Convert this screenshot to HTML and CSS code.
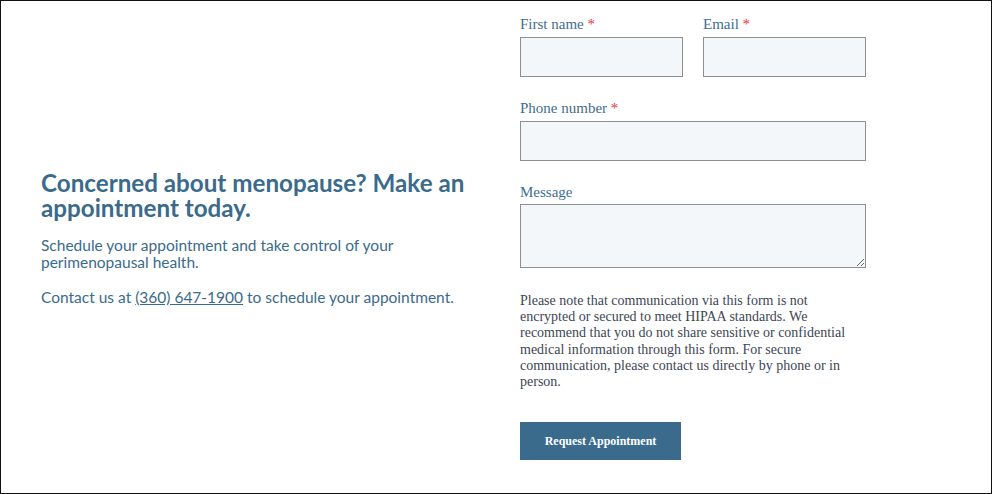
FILE: index.html
```html
<!DOCTYPE html>
<html lang="en">
<head>
<meta charset="utf-8">
<title>Request Appointment</title>
<link rel="stylesheet" href="styles.css">
</head>
<body>
<div class="frame">
  <section class="intro">
    <h2 class="intro-title">Concerned about menopause? Make an appointment today.</h2>
    <p class="intro-text">Schedule your appointment and take control of your perimenopausal health.</p>
    <p class="intro-text">Contact us at <a class="phone-link" href="#">(360) 647-1900</a> to schedule your appointment.</p>
  </section>
  <form class="form">
    <div class="row">
      <div class="field">
        <label class="label">First name <span class="req">*</span></label>
        <input class="input" type="text">
      </div>
      <div class="field">
        <label class="label">Email <span class="req">*</span></label>
        <input class="input" type="email">
      </div>
    </div>
    <div class="field">
      <label class="label">Phone number <span class="req">*</span></label>
      <input class="input" type="tel">
    </div>
    <div class="field">
      <label class="label">Message</label>
      <textarea class="input textarea"></textarea>
    </div>
    <p class="note">Please note that communication via this form is not encrypted or secured to meet HIPAA standards. We recommend that you do not share sensitive or confidential medical information through this form. For secure communication, please contact us directly by phone or in person.</p>
    <button class="submit" type="button">Request Appointment</button>
  </form>
</div>
</body>
</html>
```
FILE: styles.css
```css
* { box-sizing: border-box; }
html, body { margin: 0; padding: 0; }
body { background: #fff; }
.frame {
  width: 992px;
  height: 494px;
  border: 1px solid #111;
  display: flex;
  align-items: center;
  padding: 0 0 0 40px;
  gap: 40px;
}
.intro {
  width: 439px;
  color: #3a6b8c;
  font-family: "Lato", "Open Sans", sans-serif;
}
.intro-title {
  margin: 0 0 17px;
  font-size: 24.2px;
  line-height: 25px;
  font-weight: 700;
}
.intro-text {
  margin: 0 0 18px;
  font-size: 15.5px;
  line-height: 17px;
  font-weight: 400;
}
.phone-link { color: #3a6b8c; text-decoration: underline; }
.form {
  width: 346px;
  align-self: flex-start;
  padding-top: 12px;
  font-family: "Liberation Serif", "Times New Roman", serif;
}
.row { display: flex; gap: 20px; }
.row .field { flex: 1; }
.field { margin-bottom: 20px; }
.label {
  display: block;
  font-size: 15px;
  line-height: 20px;
  color: #3e6e90;
  padding-top: 1px;
  margin-bottom: 3px;
}
.req { color: #e8333c; }
.input {
  display: block;
  width: 100%;
  height: 40px;
  margin: 0;
  border: 1px solid #8f8f8f;
  background: #f4f7fa;
  border-radius: 0;
  font: inherit;
}
.textarea { height: 64px; resize: vertical; margin-top: -1px; }
.note {
  margin: 25px 0 32px;
  font-size: 14px;
  line-height: 16.2px;
  color: #3d4654;
}
.submit {
  display: block;
  width: 161px;
  height: 38px;
  border: 0;
  border-radius: 0;
  background: #3a6b8c;
  color: #fff;
  font-family: "Liberation Serif", "Times New Roman", serif;
  font-weight: 700;
  font-size: 12px;
  cursor: pointer;
}
```
